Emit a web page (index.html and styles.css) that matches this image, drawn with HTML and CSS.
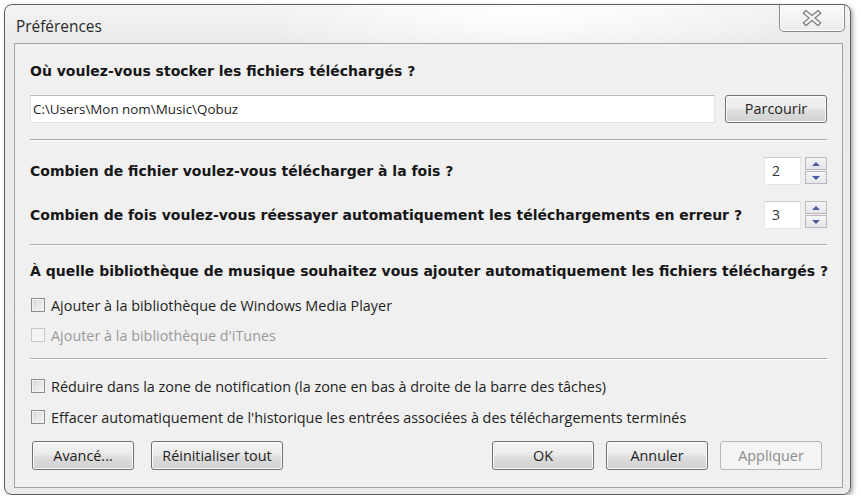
FILE: index.html
```html
<!DOCTYPE HTML>
<html>

<head>
    <title>Préférences</title>
    <meta charset="utf-8">
    <link rel="stylesheet" href="styles.css">
</head>

<body>
    <div class="window">
        <div class="titlebar">
            <span class="title">Préférences</span>
            <div class="close">
                <svg width="20" height="16" viewBox="0 0 20 16">
                    <path d="M4 3 L16 13 M16 3 L4 13" stroke="#7b7b7b" stroke-width="5" stroke-linecap="square" fill="none"/>
                    <path d="M4 3 L16 13 M16 3 L4 13" stroke="#f4f4f4" stroke-width="2.6" stroke-linecap="square" fill="none"/>
                </svg>
            </div>
        </div>
        <div class="client">
            <div class="heading row-h1">Où voulez-vous stocker les fichiers téléchargés ?</div>
            <div class="path-row">
                <div class="textbox">C:\Users\Mon nom\Music\Qobuz</div>
                <div class="button browse">Parcourir</div>
            </div>
            <div class="sep sep1"></div>
            <div class="spin-row first">
                <span class="heading">Combien de fichier voulez-vous télécharger à la fois ?</span>
                <div class="spin">
                    <div class="spin-value">2</div>
                    <div class="spin-arrows">
                        <div class="arrow"><span class="tri up"></span></div>
                        <div class="arrow"><span class="tri down"></span></div>
                    </div>
                </div>
            </div>
            <div class="spin-row second">
                <span class="heading">Combien de fois voulez-vous réessayer automatiquement les téléchargements en erreur ?</span>
                <div class="spin">
                    <div class="spin-value">3</div>
                    <div class="spin-arrows">
                        <div class="arrow"><span class="tri up"></span></div>
                        <div class="arrow"><span class="tri down"></span></div>
                    </div>
                </div>
            </div>
            <div class="sep sep2"></div>
            <div class="heading row-h2">À quelle bibliothèque de musique souhaitez vous ajouter automatiquement les fichiers téléchargés ?</div>
            <div class="check c1"><span class="box"></span>Ajouter à la bibliothèque de Windows Media Player</div>
            <div class="check c2 disabled"><span class="box"></span>Ajouter à la bibliothèque d'iTunes</div>
            <div class="sep sep3"></div>
            <div class="check c3"><span class="box"></span>Réduire dans la zone de notification (la zone en bas à droite de la barre des tâches)</div>
            <div class="check c4"><span class="box"></span>Effacer automatiquement de l'historique les entrées associées à des téléchargements terminés</div>
            <div class="actions">
                <div class="button advanced">Avancé...</div>
                <div class="button reset">Réinitialiser tout</div>
                <div class="spacer"></div>
                <div class="button ok">OK</div>
                <div class="button cancel">Annuler</div>
                <div class="button apply disabled">Appliquer</div>
            </div>
        </div>
    </div>
</body>

</html>
```

FILE: styles.css
```css
html {
    font-family: "Open Sans", "Noto Sans", sans-serif;
    font-size: 14.4px;
    color: #1a1a1a;
}

body {
    margin: 0;
    background-color: #fff;
}

* {
    box-sizing: border-box;
}

.window {
    margin: 4px 0 0 4px;
    width: 847px;
    height: 491px;
    border: 1px solid #5f5f5f;
    border-radius: 8px;
    padding: 0 7px 6px 9px;
    background: radial-gradient(ellipse 280px 70px at 520px 0, #ffffff 0%, rgba(255, 255, 255, 0) 100%), linear-gradient(#f3f3f3, #eaeaea 40px, #ececec);
    box-shadow: 2px 2px 4px rgba(0, 0, 0, .35);
}

.titlebar {
    height: 38px;
    display: flex;
    align-items: flex-start;
    justify-content: space-between;
}

.title {
    margin: 11px 0 0 2px;
    font-size: 15.4px;
    color: #2a2a2a;
}

.close {
    width: 66px;
    height: 27px;
    margin-right: -2px;
    border: 1px solid #8a8a8a;
    border-top: none;
    border-radius: 0 0 5px 5px;
    background: linear-gradient(#fafafa, #ececec);
    box-shadow: inset 0 0 0 1px #fff;
    display: flex;
    align-items: center;
    justify-content: center;
}

.client {
    height: 445px;
    border: 1px solid #a3a3a3;
    background-color: #f0f0f0;
    padding: 0 15px;
    display: flex;
    flex-direction: column;
}

.heading {
    font-family: "DejaVu Sans", sans-serif;
    font-size: 14px;
    font-weight: bold;
    white-space: nowrap;
    color: #161616;
}

.row-h1 {
    margin-top: 17px;
    height: 20px;
    line-height: 20px;
}

.path-row {
    margin-top: 14px;
    height: 28px;
    display: flex;
}

.textbox {
    flex: 1;
    background-color: #fff;
    border: 1px solid #e3e3e3;
    border-top-color: #b9b9b9;
    padding-left: 2px;
    line-height: 26px;
    font-size: 13.4px;
    color: #1e1e1e;
}

.button {
    width: 102px;
    height: 28px;
    border: 1px solid #707070;
    border-radius: 3px;
    background: linear-gradient(#f3f3f3 0%, #ebebeb 45%, #dedede 55%, #d0d0d0 100%);
    box-shadow: inset 0 0 0 1px #fbfbfb;
    text-align: center;
    line-height: 26px;
    color: #1e1e1e;
    white-space: nowrap;
}

.browse {
    margin-left: 10px;
}

.sep {
    height: 2px;
    border-top: 1px solid #a9a9a9;
    border-bottom: 1px solid #fff;
}

.sep1 {
    margin-top: 16px;
}

.sep2 {
    margin-top: 15px;
}

.sep3 {
    margin-top: 13px;
}

.spin-row {
    height: 28px;
    margin-top: 16px;
    display: flex;
    align-items: center;
    justify-content: space-between;
}

.spin {
    display: flex;
    height: 28px;
}

.spin-value {
    width: 37px;
    height: 28px;
    background-color: #fff;
    border: 1px solid #e6e6e6;
    border-top-color: #c8c8c8;
    padding-left: 7px;
    line-height: 26px;
    font-size: 14px;
    color: #333;
}

.spin-arrows {
    margin-left: 4px;
    width: 22px;
    display: flex;
    flex-direction: column;
    gap: 1px;
}

.arrow {
    height: 13px;
    border: 1px solid #b8b8bd;
    background: linear-gradient(#f6f6f8, #e4e4ea);
    display: flex;
    align-items: center;
    justify-content: center;
}

.tri {
    width: 0;
    height: 0;
    border-left: 4px solid transparent;
    border-right: 4px solid transparent;
}

.tri.up {
    border-bottom: 4px solid #4c5a9c;
}

.tri.down {
    border-top: 4px solid #4c5a9c;
}

.row-h2 {
    margin-top: 15px;
    height: 20px;
    line-height: 20px;
}

.check {
    height: 20px;
    display: flex;
    align-items: center;
    white-space: nowrap;
    color: #1e1e1e;
}

.box {
    width: 14px;
    height: 14px;
    margin: 0 6px 0 1px;
    border: 1px solid #8e8e8e;
    background: linear-gradient(135deg, #d6d6d6, #f7f7f7);
    box-shadow: inset 0 0 0 1px #f2f2f2;
}

.check.disabled {
    color: #9a9a9a;
}

.check.disabled .box {
    border-color: #c9c9c9;
    background: #f4f4f4;
    box-shadow: none;
}

.c1 {
    margin-top: 14px;
}

.c2 {
    margin-top: 10px;
}

.c3 {
    margin-top: 16px;
}

.c4 {
    margin-top: 11px;
}

.actions {
    margin-top: 14px;
    height: 29px;
    display: flex;
}

.actions .button {
    height: 29px;
    line-height: 27px;
}

.advanced {
    margin-left: 2px;
}

.reset {
    margin-left: 17px;
    width: 132px;
}

.spacer {
    flex: 1;
}

.cancel {
    margin-left: 12px;
}

.apply {
    margin-left: 12px;
    margin-right: 5px;
}

.button.disabled {
    border-color: #b3b6b8;
    background: #f4f4f4;
    box-shadow: none;
    color: #8a8a8a;
}
```
